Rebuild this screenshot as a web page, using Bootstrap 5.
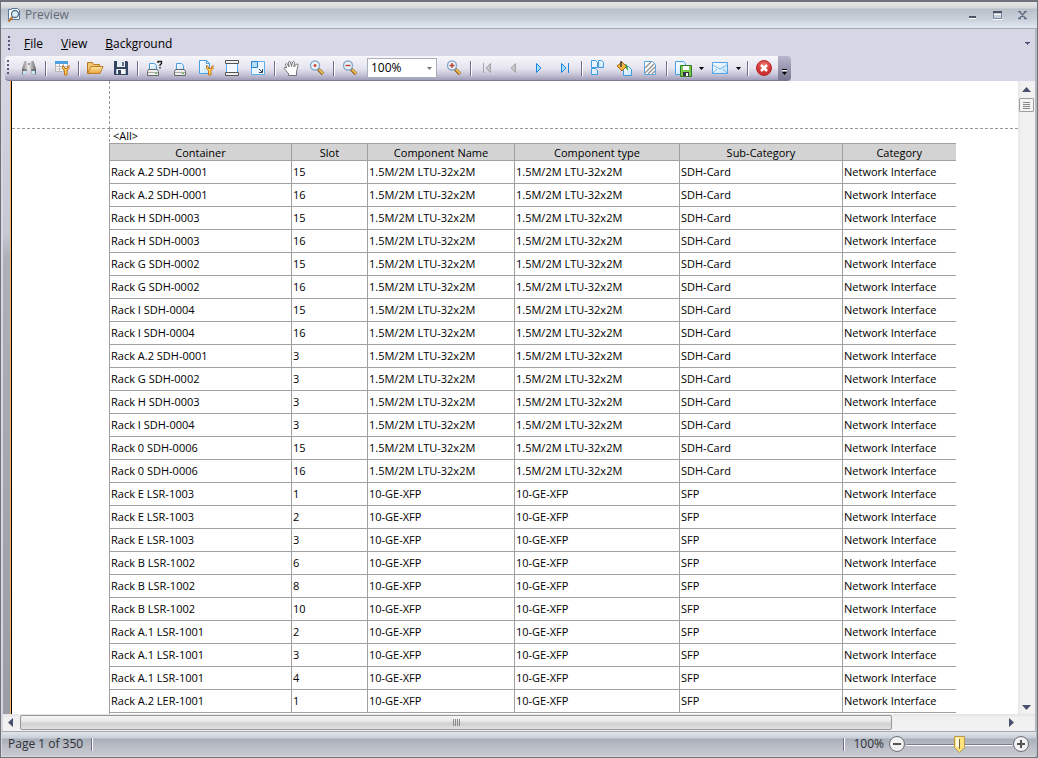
<!DOCTYPE html>
<html lang="en">
<head>
<meta charset="utf-8">
<meta name="viewport" content="width=device-width, initial-scale=1">
<title>Preview</title>
<link href="https://cdn.jsdelivr.net/npm/bootstrap@5.3.0/dist/css/bootstrap.min.css" rel="stylesheet">
<script src="https://cdn.jsdelivr.net/npm/bootstrap@5.3.0/dist/js/bootstrap.bundle.min.js"></script>
<style>
body{font-family:"Open Sans","Noto Sans",sans-serif;font-size:12px;line-height:16px;color:#000;background:#d7d6e4}
svg{display:block;flex:none}
button{border:0;background:none;padding:0;color:inherit}
.app-window{border:1px solid #6d727b;border-top-width:2px;box-shadow:inset 1px 0 #d8d8dc,inset -2px 0 #b4b6c0}
.titlebar{height:27px;padding:0 2px 0 6px;border-bottom:1px solid #a5abb5;background:linear-gradient(#e6e7e9 0,#d5d7da 6px,#b9c0ca 7px,#cbd2dc 18px,#e3e9f1 100%);color:#646a76}
.caption-btn{width:25px;height:20px}
.menubar{height:27px;padding:2px 7px 0 5px}
.menubar a{color:#000;padding:2px 7px}
.grip{width:3px;height:16px;margin:0 2px;background:repeating-linear-gradient(#5b5682 0 2px,transparent 2px 4px);clip-path:inset(0 1px 0 0)}
.toolstrip{height:25px;margin-left:4px;padding-right:1px;border-bottom:1px solid #7c7994;border-radius:4px 0 0 4px;background:linear-gradient(#f6f6fb 0,#e6e5f0 50%,#cac8da 75%,#a09db9 100%)}
.tool{width:26px;height:23px;display:flex;align-items:center;justify-content:center}
.tool-drop{width:11px;height:23px;display:flex;align-items:center;justify-content:center}
.tool-sep{width:2px;height:15px;margin:0 2px 0 3px;background:linear-gradient(90deg,#6f6c92 50%,#fff 50%)}
.zoom-pick{width:70px;height:20px;margin:0 4px;padding:0 3px;border:1px solid #a9b1b8;border-radius:0;color:#000;font-size:12px;line-height:16px;appearance:none;background:#fff url("data:image/svg+xml,%3Csvg xmlns='http://www.w3.org/2000/svg' width='5' height='3'%3E%3Cpath d='M0 0h5L2.500 3z' fill='%23777'/%3E%3C/svg%3E") no-repeat right 4px center}
.tool-end{width:13px;height:25px;border-radius:0 4px 4px 0;background:linear-gradient(#b8b6cc,#77748f)}
.gutter{width:9px;margin-left:2px;background:linear-gradient(#d4d4e4 0,#c6c8d4 24%,#adb0b8 28%,#9a9da5 100%);border-right:2px solid #ffb75e}
.paper{background:#fff;border-left:1px solid #000;display:grid;grid-template-columns:98px minmax(0,1fr);grid-template-rows:48px minmax(0,1fr);margin-left:-1px}
.margin-r{border-right:1px dashed #999}
.margin-b{border-bottom:1px dashed #999}
.band{font-size:11px;line-height:13px;padding-left:3px}
.report{width:846px;table-layout:fixed;border-collapse:collapse;font-size:11px;line-height:16px;margin:1px 0 0 -1px}
.report th{font-weight:400;text-align:center;background:#d3d3d3;height:17px;padding:0;line-height:15px}
.report td{height:23px;padding:0 1px}
.report th,.report td{border:1px solid #a0a0a0;white-space:nowrap;overflow:hidden}
.report tr>:last-child{border-right:0}
.vbar{width:17px;margin-right:2px;background:linear-gradient(90deg,#e6e6e8,#f0f0f0 20%,#f2f2f2);padding:6px 0 4px}
.vthumb{width:15px;height:14px;border:1px solid #9c9c9c;border-radius:1px;background:#f4f4f4;margin-top:6px}
.hbar{height:17px;margin:0 2px;background:linear-gradient(#e4e4e6,#f0f0f0 20%,#f2f2f2);padding:1px 5px}
.hthumb{height:15px;flex:0 0 872px;max-width:89%;border:1px solid #979797;border-radius:2px;background:linear-gradient(#f4f4f4 0,#eaeaea 35%,#d0d0d2 60%,#e2e2e2 100%);margin-left:7px}
.statusbar{height:25px;border-top:1px solid #a3a7b1;margin:0 1px 1px;padding:0 6px;background:linear-gradient(#e1e5eb 0,#c9cfd8 6px,#a8afb9 7px,#bdc0c8 16px,#c8cad0 100%);color:#2f3038}
.stat-sep{width:2px;height:13px;background:linear-gradient(90deg,#6f6c92 50%,#fff 50%)}
.zoom-range{appearance:none;width:106px;height:20px;margin:0;background:linear-gradient(#777b85,#777b85) 0 10px/100% 1px no-repeat,linear-gradient(#fff,#fff) 0 11px/100% 1px no-repeat}
.zoom-range::-webkit-slider-thumb{appearance:none;width:11px;height:17px;border:0;background:url("data:image/svg+xml,%3Csvg xmlns='http://www.w3.org/2000/svg' width='11' height='17'%3E%3Cpath d='M.5.5h10v11l-5 5-5-5z' fill='%23ffe27a' stroke='%23b89a55'/%3E%3Cpath d='M2 2h3v9H2z' fill='%23fffbe0'/%3E%3Cpath d='M5 3h1v10H5z' fill='%23786430'/%3E%3C/svg%3E") no-repeat}
</style>
</head>
<body>
<svg width="0" height="0" class="position-absolute" aria-hidden="true">
 <defs>
  <linearGradient id="gold" x2="0" y2="1"><stop stop-color="#ffe9a6"/><stop offset="1" stop-color="#e9a13b"/></linearGradient>
  <linearGradient id="sky" x2="1" y2="1"><stop stop-color="#fff"/><stop offset="1" stop-color="#bfe2fb"/></linearGradient>
  <radialGradient id="red" cy=".3"><stop stop-color="#f07c78"/><stop offset="1" stop-color="#cf3030"/></radialGradient>
  <linearGradient id="steel" x2="1"><stop stop-color="#777"/><stop offset=".45" stop-color="#eee"/><stop offset="1" stop-color="#666"/></linearGradient>
  <symbol id="printer" viewBox="0 0 14 14"><path d="M3.500 8V1.500h5l2 2V8" fill="url(#sky)" stroke="#4a9fe0"/><path d="M2.500 7.500h9l1 2v4h-11v-4z" fill="#eee" stroke="#666"/><path d="M2 10.500h10" stroke="#aaa"/><path d="M9 11h2v1H9z" fill="#5fc030"/></symbol>
  <symbol id="wrench" viewBox="0 0 8 11"><path d="M.5.5v3l2 2V10h2.500V5.500l2-2v-3L5.500 2v1.500h-3V2z" fill="#ffd25a" stroke="#c8701c"/></symbol>
  <symbol id="lens" viewBox="0 0 16 16"><path d="M9 9l5 5" stroke="#8b6430" stroke-width="3.500"/><path d="M10 9.500l4 4" stroke="#f2bd4b" stroke-width="1.800"/><circle cx="6" cy="5.500" r="4.500" fill="#e8f4fd" stroke="#8ca9c8" stroke-width="1.400"/></symbol>
 </defs>
</svg>

<div class="app-window d-flex flex-column vh-100">
 <header class="titlebar d-flex align-items-center">
  <svg width="14" height="16" viewBox="0 0 14 16"><path d="M1.500 2.500h3v-1h6l2 2v9h-11z" fill="#fff" stroke="#55779f"/><path d="M5.500 10L1.500 14.500" stroke="#b87830" stroke-width="2.500"/><circle cx="8" cy="7" r="3.500" fill="#d8eefb" stroke="#5a7186" stroke-width="1.300"/></svg>
  <span class="ms-1 flex-grow-1">Preview</span>
  <button class="caption-btn d-flex align-items-center justify-content-center" aria-label="Minimize"><svg width="8" height="10" viewBox="0 0 8 10"><path d="M0 6h7v2H0z" fill="#4c5565"/><path d="M0 8h7v1H0z" fill="#fff"/></svg></button>
  <button class="caption-btn d-flex align-items-center justify-content-center" aria-label="Maximize"><svg width="9" height="9" viewBox="0 0 9 9"><path d="M.5 2v5.500h8V2" fill="none" stroke="#7488a6"/><path d="M0 0h9v2H0z" fill="#4c5565"/><path d="M1 3h7v1H1zM0 8h9v1H0z" fill="#fff"/></svg></button>
  <button class="caption-btn d-flex align-items-center justify-content-center" aria-label="Close"><svg width="9" height="9" viewBox="0 0 9 9"><path d="M0 .5h3M6 .5h3M0 7.500h3M6 7.500h3M1.500.5l6 7M7.500.5l-6 7" stroke="#627086" stroke-width="1.400"/></svg></button>
 </header>

 <nav class="menubar d-flex align-items-center">
  <span class="grip"></span>
  <a href="#" class="text-decoration-none ms-1"><u>F</u>ile</a>
  <a href="#" class="text-decoration-none ms-1"><u>V</u>iew</a>
  <a href="#" class="text-decoration-none ms-1"><u>B</u>ackground</a>
  <button class="ms-auto" aria-label="Menu options"><svg width="5" height="4" viewBox="0 0 5 4"><path d="M0 0h5v1H4L2.500 3 1 1H0z" fill="#4a4672"/></svg></button>
 </nav>

 <div class="d-flex">
  <div class="toolstrip d-flex align-items-center" role="toolbar" aria-label="Preview tools">
   <span class="grip"></span><span class="pe-1"></span>
   <button class="tool" aria-label="Search"><svg width="16" height="16"><path d="M3.500 1h2L7 3.500V6h2V3.500L10.500 1h2L15 9v5.500h-5V9H6v5.500H1V9z" fill="url(#steel)"/><path d="M1 10h5M10 10h5" stroke="#555"/><path d="M2 11h3v3H2zM11 11h3v3h-3z" fill="#bfe6fb"/><path d="M7 4h2" stroke="#555"/></svg></button>
   <i class="tool-sep"></i>
   <button class="tool" aria-label="Customize"><svg width="17" height="16"><path d="M1.500 2.500h12v9h-12z" fill="#fff" stroke="#b5b5b5"/><path d="M1 1h13v3H1z" fill="#4e9fe0"/><path d="M1 6.500h13M1 9h13M5.500 4v8M9.500 4v8" stroke="#bbb"/><use href="#wrench" x="8" y="5" width="8" height="11"/></svg></button>
   <i class="tool-sep"></i>
   <button class="tool" aria-label="Open"><svg width="17" height="16"><path d="M.5 13.500v-11h5l1 2h6v3" fill="#f3c671" stroke="#b87825"/><path d="M.5 13.500L4 6.500h12l-3 7z" fill="url(#gold)" stroke="#bd7b23"/></svg></button>
   <button class="tool" aria-label="Save"><svg width="16" height="16"><path d="M1 1h13l1 1v13H1z" fill="#34455f"/><path d="M4 1h8v6H4z" fill="#e8eef5"/><path d="M3 9h10v5H3z" fill="#a9c4de"/><path d="M4 9h8v5H4z" fill="#f5f5f5"/><path d="M5 10h3v4H5z" fill="#34455f"/><path d="M9 2h2v4H9z" fill="#62728c"/></svg></button>
   <i class="tool-sep"></i>
   <button class="tool" aria-label="Print options"><svg width="17" height="17"><use href="#printer" x="0" y="2" width="14" height="14"/><path d="M12 3V1.500h3.500v2L14 5v1M14 7v1.500" fill="none" stroke="#222" stroke-width="1.400"/></svg></button>
   <button class="tool" aria-label="Print"><svg width="14" height="16"><use href="#printer" y="2" width="14" height="14"/></svg></button>
   <button class="tool" aria-label="Page setup"><svg width="17" height="16"><path d="M1.500.5h7l3 3v10h-10z" fill="url(#sky)" stroke="#4a9fe0"/><path d="M8.500.5v3h3" fill="none" stroke="#4a9fe0"/><use href="#wrench" x="8" y="5" width="8" height="11"/></svg></button>
   <button class="tool" aria-label="Header and footer"><svg width="16" height="16"><path d="M2.500 4v8M13.500 4v8" stroke="#5aa8e4"/><path d="M3 3h10v10H3z" fill="#f2f8fd"/><path d="M1.500.5h13v3h-13zM1.500 12.500h13v3h-13z" fill="#eee" stroke="#555"/></svg></button>
   <button class="tool" aria-label="Scale"><svg width="16" height="16"><path d="M1.500 1.500h13v13h-13z" fill="#eaf5fd" stroke="#62b0e8"/><path d="M1.500 1.500h6v6h-6z" fill="#b7dcf6" stroke="#2684d0"/><path d="M9 9l3 3M12.500 9v3.500H9" fill="none" stroke="#345"/></svg></button>
   <i class="tool-sep"></i>
   <button class="tool" aria-label="Hand tool"><svg width="17" height="17"><path d="M5.500 15.500v-2L1 8.500Q1 6.500 3.500 8L2.500 4Q3.500 2.500 4.500 4L6 7 5.500 2Q7 .500 7.500 2L8.500 6.500 9.500 2Q11 .500 11.500 2.500L11 7 13.500 4Q15.500 3.500 15 5.500L13.500 12v3.500z" fill="#fff" stroke="#666" stroke-width=".9"/></svg></button>
   <button class="tool" aria-label="Magnifier"><svg width="16" height="16"><use href="#lens" width="16" height="16"/><circle cx="6" cy="5.500" r="1.500" fill="#d24732"/></svg></button>
   <i class="tool-sep"></i>
   <button class="tool" aria-label="Zoom out"><svg width="16" height="16"><use href="#lens" width="16" height="16"/><path d="M3.500 5.500h5" stroke="#bd3c2b" stroke-width="1.400"/></svg></button>
   <select class="zoom-pick" aria-label="Zoom"><option>100%</option><option>50%</option></select>
   <button class="tool" aria-label="Zoom in"><svg width="16" height="16"><use href="#lens" width="16" height="16"/><path d="M3.500 5.500h5M6 3v5" stroke="#bd3c2b" stroke-width="1.400"/></svg></button>
   <i class="tool-sep"></i>
   <button class="tool" aria-label="First page"><svg width="10" height="12"><path d="M1.500 1v10M8.500 1.500v9L4 6z" fill="#c8c8c8" stroke="#a4a4a8"/></svg></button>
   <button class="tool" aria-label="Previous page"><svg width="8" height="12"><path d="M6.500 1.500v9L2 6z" fill="#c8c8c8" stroke="#a4a4a8"/></svg></button>
   <button class="tool" aria-label="Next page"><svg width="8" height="12"><path d="M1.500 1.500v9L6 6z" fill="#a9dcfb" stroke="#1b86dc"/></svg></button>
   <button class="tool" aria-label="Last page"><svg width="10" height="12"><path d="M8.500 1v10M1.500 1.500v9L6 6z" fill="#a9dcfb" stroke="#1b86dc"/></svg></button>
   <i class="tool-sep"></i>
   <button class="tool" aria-label="Multiple pages"><svg width="14" height="16"><path d="M.5.5h4l2 2v5h-6zM7.500.5h3l2 2v5h-5zM.5 8.500h4l2 2v4h-6z" fill="url(#sky)" stroke="#3f9be2"/></svg></button>
   <button class="tool" aria-label="Background color"><svg width="17" height="17"><path d="M7.500 6.500h5l3 3v6h-8z" fill="url(#sky)" stroke="#3f9be2"/><path d="M1 6l5-4 4.500 4.500L6 11z" fill="#f4b445" stroke="#a86a18"/><path d="M5 7V1" stroke="#333" stroke-width="1.400"/><path d="M9 4q3 0 3 7l-2-3z" fill="#2f9535"/></svg></button>
   <button class="tool" aria-label="Watermark"><svg width="14" height="16"><path d="M1.500 1.500h8l3 3v10h-11z" fill="#fff" stroke="#5ba6dd"/><path d="M2 8l6-6M2 13L11 4M5 14l7-7M9 14l3-3" stroke="#909090" stroke-width="1.400"/></svg></button>
   <i class="tool-sep"></i>
   <button class="tool" aria-label="Export"><svg width="17" height="17"><path d="M.5 1.500h8l2 2v11h-10z" fill="url(#sky)" stroke="#4a9fe0"/><path d="M5.500 5.500h11v11h-11z" fill="#79c94d" stroke="#347a28"/><path d="M8 6h6v4H8z" fill="#fff"/><path d="M8 12h6v4H8z" fill="#334"/><path d="M11 13h2v3h-2z" fill="#fff"/></svg></button>
   <button class="tool-drop" aria-label="Export formats"><svg width="5" height="3"><path d="M0 0h5L2.500 3z"/></svg></button>
   <button class="tool" aria-label="Send by e-mail"><svg width="16" height="12"><path d="M.5.5h15v11H.5z" fill="url(#sky)" stroke="#52a5e2"/><path d="M1 3l7 4 7-4M1 11l4-4M15 11l-4-4" fill="none" stroke="#76b8e8"/></svg></button>
   <button class="tool-drop" aria-label="Send formats"><svg width="5" height="3"><path d="M0 0h5L2.500 3z"/></svg></button>
   <i class="tool-sep"></i>
   <button class="tool" aria-label="Close preview"><svg width="16" height="16"><circle cx="8" cy="8" r="7.500" fill="url(#red)" stroke="#b52a2a"/><path d="M5 5l6 6M11 5l-6 6" stroke="#fff" stroke-width="2.600"/></svg></button>
  </div>
  <button class="tool-end d-flex align-items-end justify-content-center pb-1" aria-label="Toolbar options"><svg width="7" height="8"><path d="M1 0h5v1H1zM1 3h5L3.500 6z"/><path d="M1 1h5v1H1z" fill="#fff"/></svg></button>
 </div>

 <main class="d-flex flex-grow-1 overflow-hidden" style="min-height:0">
  <div class="gutter flex-shrink-0"></div>
  <div class="paper flex-grow-1 overflow-hidden">
   <div class="margin-r margin-b"></div><div class="margin-b"></div>
   <div class="margin-r"></div>
   <div>
    <div class="band">&lt;All&gt;</div>
    <table class="report">
     <colgroup><col width="182"><col width="76"><col width="147"><col width="165"><col width="163"><col width="113"></colgroup>
     <thead><tr><th>Container</th><th>Slot</th><th>Component Name</th><th>Component type</th><th>Sub-Category</th><th>Category</th></tr></thead>
     <tbody id="rows"></tbody>
    </table>
   </div>
  </div>
  <div class="vbar d-flex flex-column align-items-center flex-shrink-0">
   <svg width="9" height="5"><path d="M4.500 0L9 5H0z" fill="#49506e"/></svg>
   <div class="vthumb d-flex align-items-center justify-content-center"><svg width="7" height="7"><path d="M0 .5h7M0 2.500h7M0 4.500h7M0 6.500h7" stroke="#888"/></svg></div>
   <svg class="mt-auto" width="9" height="5"><path d="M0 0h9L4.500 5z" fill="#49506e"/></svg>
  </div>
 </main>

 <div class="hbar d-flex align-items-center">
  <svg width="5" height="9"><path d="M5 0v9L0 4.500z" fill="#49506e"/></svg>
  <div class="hthumb d-flex align-items-center justify-content-center"><svg width="7" height="7"><path d="M.5 0v7M2.500 0v7M4.500 0v7M6.500 0v7" stroke="#888"/></svg></div>
  <svg class="ms-auto me-3" width="5" height="9"><path d="M0 0v9l5-4.500z" fill="#49506e"/></svg>
 </div>

 <footer class="statusbar d-flex align-items-center">
  <span>Page 1 of 350</span><i class="stat-sep ms-2"></i>
  <i class="stat-sep ms-auto me-2"></i><label for="zoom">100%</label>
  <button class="ms-1" aria-label="Decrease zoom"><svg width="18" height="18"><circle cx="9" cy="9" r="7.500" fill="#f1f1f3" stroke="#6d6f76"/><path d="M5 9h8" stroke="#555" stroke-width="2"/></svg></button>
  <input class="zoom-range" type="range" id="zoom" min="0" max="100" value="50">
  <button aria-label="Increase zoom"><svg width="18" height="18"><circle cx="9" cy="9" r="7.500" fill="#f1f1f3" stroke="#6d6f76"/><path d="M5 9h8M9 5v8" stroke="#555" stroke-width="2"/></svg></button>
 </footer>
</div>

<script>
const ltu = [["Rack A.2 SDH-0001",15],["Rack A.2 SDH-0001",16],["Rack H SDH-0003",15],["Rack H SDH-0003",16],["Rack G SDH-0002",15],["Rack G SDH-0002",16],["Rack I SDH-0004",15],["Rack I SDH-0004",16],["Rack A.2 SDH-0001",3],["Rack G SDH-0002",3],["Rack H SDH-0003",3],["Rack I SDH-0004",3],["Rack 0 SDH-0006",15],["Rack 0 SDH-0006",16]];
const xfp = [["Rack E LSR-1003",1],["Rack E LSR-1003",2],["Rack E LSR-1003",3],["Rack B LSR-1002",6],["Rack B LSR-1002",8],["Rack B LSR-1002",10],["Rack A.1 LSR-1001",2],["Rack A.1 LSR-1001",3],["Rack A.1 LSR-1001",4],["Rack A.2 LER-1001",1]];
const body = document.getElementById("rows");
const add = (list, name, sub) => list.forEach(r => {
  const tr = body.insertRow();
  [...r, name, name, sub, "Network Interface"].forEach(v => tr.insertCell().textContent = v);
});
add(ltu, "1.5M/2M LTU-32x2M", "SDH-Card");
add(xfp, "10-GE-XFP", "SFP");
</script>
</body>
</html>
